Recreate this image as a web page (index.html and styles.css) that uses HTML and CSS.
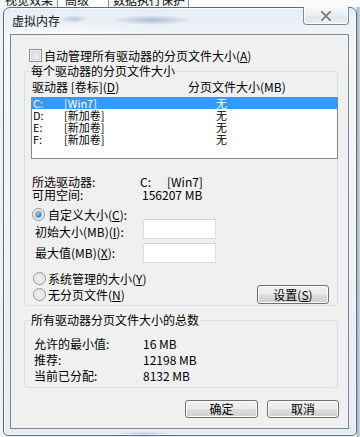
FILE: index.html
```html
<!DOCTYPE html>
<html lang="zh-CN">
<head>
<meta charset="utf-8">
<title>虚拟内存</title>
<link rel="stylesheet" href="styles.css">
</head>
<body>
<div class="screen">
  <div class="bg-tabs">
    <span class="tab t1">视觉效果</span>
    <span class="tab t2">高级</span>
    <span class="tab t3">数据执行保护</span>
  </div>
  <div class="window">
    <div class="titlebar">
      <span class="title">虚拟内存</span>
      <span class="close">
        <svg width="14" height="12" viewBox="0 0 14 12">
          <path d="M3 2 L11 10 M11 2 L3 10" stroke="#f8fbfd" stroke-width="4.4" stroke-linecap="square" fill="none"/>
          <path d="M3 2 L11 10 M11 2 L3 10" stroke="#7a838e" stroke-width="2" stroke-linecap="square" fill="none"/>
        </svg>
      </span>
    </div>
    <div class="client">
      <div class="check-row">
        <span class="checkbox"></span>
        <span>自动管理所有驱动器的分页文件大小(<u>A</u>)</span>
      </div>

      <fieldset class="group g1">
        <legend>每个驱动器的分页文件大小</legend>
        <div class="list-head">
          <span class="h-drive">驱动器 [卷标](<u>D</u>)</span>
          <span>分页文件大小(MB)</span>
        </div>
        <div class="listbox">
          <div class="row sel"><span>C:</span><span>[Win7]</span><span>无</span></div>
          <div class="row"><span>D:</span><span>[新加卷]</span><span>无</span></div>
          <div class="row"><span>E:</span><span>[新加卷]</span><span>无</span></div>
          <div class="row"><span>F:</span><span>[新加卷]</span><span>无</span></div>
        </div>
        <div class="info">
          <span>所选驱动器:</span><span class="v1">C:<span class="vol">[Win7]</span></span>
          <span>可用空间:</span><span class="v2">156207 MB</span>
        </div>
        <div class="radio-row r1">
          <span class="radio on"></span><span>自定义大小(<u>C</u>):</span>
        </div>
        <div class="field-row f1">
          <span class="field-label">初始大小(MB)(<u>I</u>):</span>
          <span class="input"></span>
        </div>
        <div class="field-row f2">
          <span class="field-label">最大值(MB)(<u>X</u>):</span>
          <span class="input"></span>
        </div>
        <div class="radio-row r2">
          <span class="radio"></span><span>系统管理的大小(<u>Y</u>)</span>
        </div>
        <div class="radio-row r3">
          <span class="radio"></span><span>无分页文件(<u>N</u>)</span>
          <span class="btn set">设置(<u>S</u>)</span>
        </div>
      </fieldset>

      <fieldset class="group g2">
        <legend>所有驱动器分页文件大小的总数</legend>
        <div class="totals">
          <span>允许的最小值:</span><span>16 MB</span>
          <span>推荐:</span><span>12198 MB</span>
          <span>当前已分配:</span><span>8132 MB</span>
        </div>
      </fieldset>

      <div class="actions">
        <span class="btn ok">确定</span>
        <span class="btn cancel">取消</span>
      </div>
    </div>
  </div>
</div>
</body>
</html>
```

FILE: styles.css
```css
* { box-sizing: border-box; }
html, body { margin: 0; padding: 0; }
body {
  width: 360px;
  height: 437px;
  overflow: hidden;
  font-family: "Noto Sans CJK SC", "Noto Sans", sans-serif;
  font-size: 12px;
  color: #000;
}
u { text-decoration: underline; text-underline-offset: 1px; }

.screen {
  width: 360px;
  height: 437px;
  background: linear-gradient(90deg, #eef2f5 0, #eef2f5 356px, #9fb4c6 357px, #c8d6e2 360px);
  overflow: hidden;
}

/* background window tabs (mostly hidden behind the dialog) */
.bg-tabs {
  height: 7px;
  overflow: hidden;
  display: flex;
  background: #fbfbfb;
}
.tab {
  display: block;
  height: 7px;
  line-height: 0;
  border-right: 1px solid #8b8e94;
  color: #111;
}
.t1 { width: 58px; padding-left: 5px; background: #f4f5f6; }
.t2 { width: 51px; padding-left: 7px; background: #fff; }
.t3 { width: 80px; padding-left: 4px; background: #f4f5f6; }

/* dialog window */
.window {
  margin-left: 3px;
  width: 354px;
  height: 429px;
  border: 1px solid #5d6874;
  border-radius: 7px 7px 5px 5px;
  background:
    radial-gradient(ellipse 40px 5px at 148px 12px, rgba(90,120,160,.45), transparent),
    radial-gradient(ellipse 14px 4px at 70px 11px, rgba(90,120,160,.35), transparent),
    radial-gradient(ellipse 30px 3px at 140px 427px, rgba(70,110,170,.55), transparent),
    radial-gradient(ellipse 90px 14px at 60px 30px, rgba(255,255,255,.9), transparent),
    linear-gradient(180deg, #e6eef4 0, #f3f7fa 40px, #eef4f8 200px, #e4edf3 100%);
  box-shadow: inset 0 0 0 1px rgba(255,255,255,.75);
}

.titlebar {
  height: 26px;
  display: flex;
  align-items: flex-start;
}
.title {
  padding: 6px 0 0 8px;
  line-height: 14px;
  color: #111;
}
.close {
  margin-left: auto;
  margin-right: 7px;
  width: 46px;
  height: 18px;
  margin-top: -1px;
  border: 1px solid #7e8a96;
  border-top: 0;
  border-radius: 0 0 4px 4px;
  background: linear-gradient(180deg, #f6f9fb 0, #e8eef3 50%, #dde6ec 51%, #e9f0f5 100%);
  box-shadow: inset 0 -1px 0 #fff, inset 1px 0 0 #fff, inset -1px 0 0 #fff;
  display: flex;
  align-items: center;
  justify-content: center;
}

.client {
  margin-left: 6px;
  width: 339px;
  height: 395px;
  border: 1px solid #7a8794;
  background: #f0f0f0;
}

.check-row {
  margin: 14px 0 0 18px;
  height: 13px;
  display: flex;
  align-items: center;
  gap: 2px;
  line-height: 13px;
}
.checkbox {
  width: 13px;
  height: 13px;
  border: 1px solid #8e8f8f;
  background: linear-gradient(135deg, #cbcfd5 0, #eef0f2 70%, #f6f6f6 100%);
  box-shadow: inset 0 0 0 1px #f4f4f4, inset 0 0 0 2px #d3d6da;
  flex: none;
}

.group {
  margin: 0;
  padding: 0;
  min-width: 0;
  border: 1px solid #d5dfe5;
  border-radius: 3px;
  width: 314px;
  margin-left: 13px;
}
.group legend {
  padding: 0 1px;
  margin-left: 5px;
  line-height: 14px;
}
.g1 { margin-top: 2px; padding-bottom: 1px; }
.g2 { margin-top: 7px; padding-bottom: 3px; }

.list-head {
  margin: 3px 0 0 7px;
  display: flex;
  line-height: 12px;
  height: 12px;
}
.h-drive { width: 156px; }

.listbox {
  margin: 4px 0 0 6px;
  width: 307px;
  height: 62px;
  border: 1px solid #828790;
  background: #fff;
  padding-left: 1px;
}
.row {
  display: grid;
  grid-template-columns: 31px 152px auto;
  height: 12px;
  line-height: 12px;
  font-size: 11px;
}
.row.sel {
  height: 11px;
  line-height: 11px;
  background: #3399ff;
  color: #fff;
  margin-left: -1px;
  padding-left: 1px;
}

.info {
  margin: 16px 0 0 7px;
  display: grid;
  grid-template-columns: 108px auto;
  line-height: 13px;
}
.vol { margin-left: 16px; }
.v2 { padding-left: 2px; }

.radio-row {
  display: flex;
  align-items: center;
  line-height: 13px;
}
.r1 { margin: 7px 0 0 7px; height: 11px; align-items: flex-start; gap: 3px; }
.r2 { margin: 9px 0 0 8px; height: 13px; gap: 2px; }
.r3 { margin: 0 8px 0 8px; height: 19px; gap: 2px; }
.radio {
  width: 13px;
  height: 13px;
  border-radius: 50%;
  border: 1px solid #8e8f8f;
  background: radial-gradient(circle at 50% 50%, #f4f4f4 0, #e2e4e6 45%, #cfd3d8 100%);
  box-shadow: inset 0 0 0 1px #f6f6f6;
  flex: none;
  position: relative;
}
.radio.on::after {
  content: "";
  position: absolute;
  left: 3px; top: 3px;
  width: 5px; height: 5px;
  border-radius: 50%;
  background: radial-gradient(circle at 40% 35%, #a5dcff 0, #2b8ad8 55%, #0f4f8f 100%);
  box-shadow: 0 0 0 1px rgba(40,100,170,.45);
}

.field-row {
  margin-left: 10px;
  height: 20px;
  display: flex;
}
.f1 { align-items: flex-end; }
.f2 { align-items: center; margin-top: 4px; }
.field-label { width: 108px; line-height: 14px; }
.input {
  width: 73px;
  height: 20px;
  background: #fff;
  border: 1px solid #dadee3;
  border-top-color: #d0d5da;
}

.btn {
  display: flex;
  align-items: center;
  justify-content: center;
  border: 1px solid #707070;
  border-radius: 3px;
  background: linear-gradient(180deg, #f2f2f2 0, #ebebeb 48%, #dddddd 52%, #cfcfcf 100%);
  box-shadow: inset 0 0 0 1px #fcfcfc;
  line-height: 14px;
  color: #000;
}
.set { margin-left: auto; width: 72px; height: 19px; }

.totals {
  margin: 9px 0 0 9px;
  display: grid;
  grid-template-columns: 109px auto;
  line-height: 16px;
}

.actions {
  margin-top: 12px;
  padding-right: 9px;
  display: flex;
  justify-content: flex-end;
  gap: 9px;
}
.ok { width: 73px; height: 18px; }
.cancel { width: 72px; height: 18px; }
```
